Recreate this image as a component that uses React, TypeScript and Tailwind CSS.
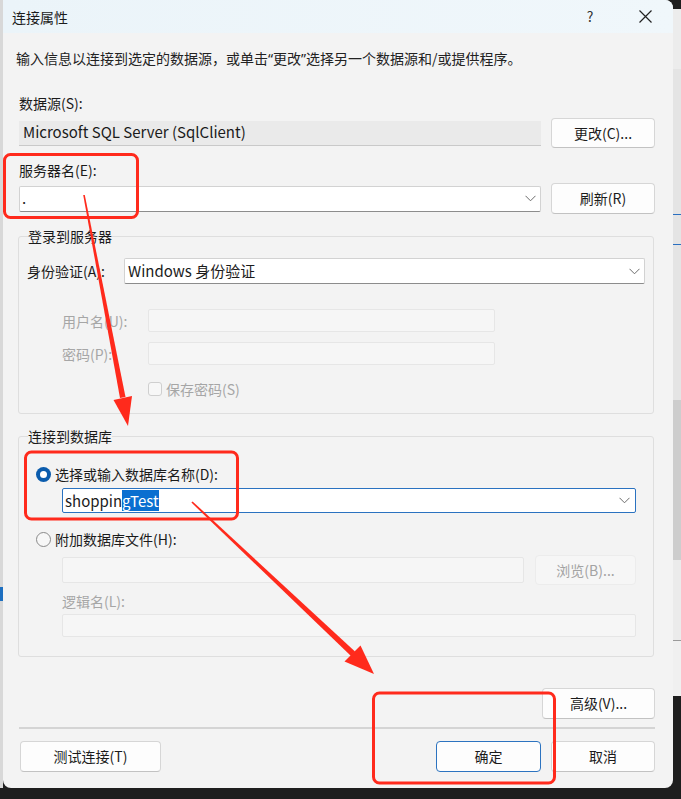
import React from "react";

const Chevron = () => (
  <svg width="11" height="7" viewBox="0 0 11 7" className="shrink-0">
    <path d="M0.5 0.8 L5.5 5.8 L10.5 0.8" stroke="#6b6b6b" fill="none" strokeWidth="1" />
  </svg>
);

function Btn({
  children,
  className = "",
  disabled = false,
  primary = false,
}: {
  children: React.ReactNode;
  className?: string;
  disabled?: boolean;
  primary?: boolean;
}) {
  const base = disabled
    ? "bg-[#f6f6f6] border-[#ececec] text-[#a3a3a3]"
    : primary
    ? "bg-[#fdfdfd] border-[#2c73c0] text-[#1b1b1b]"
    : "bg-[#fdfdfd] border-[#d6d6d6] border-b-[#c2c2c2] text-[#1b1b1b]";
  return (
    <div className={`flex items-center justify-center rounded-[4px] border text-[14px] ${base} ${className}`}>
      {children}
    </div>
  );
}

function Radio({ checked }: { checked?: boolean }) {
  if (checked) {
    return (
      <div className="w-[15px] h-[15px] rounded-full bg-[#0b5cad] flex items-center justify-center shrink-0">
        <div className="w-[7px] h-[7px] rounded-full bg-white" />
      </div>
    );
  }
  return <div className="w-[15px] h-[15px] rounded-full border border-[#8a8a8a] bg-[#f7f7f7] shrink-0" />;
}

export default function App() {
  return (
    <div className="relative w-[681px] h-[799px] bg-[#1e1e1e] overflow-hidden font-['Noto_Sans_CJK_SC','Noto_Sans',sans-serif] text-[#1b1b1b]">
      <div className="flex h-[788px]">
        {/* left strip */}
        <div className="w-[3px] h-full bg-[#d8d8d8] flex flex-col">
          <div className="h-[587px]" />
          <div className="h-[14px] bg-[#1d6fc0]" />
        </div>

        {/* dialog */}
        <div className="w-[670px] h-full bg-[#f3f3f3] rounded-b-[8px] rounded-tr-[8px] flex flex-col">
          {/* title bar */}
          <div className="h-[33px] flex items-center bg-gradient-to-r from-[#ebf4f9] to-[#f0f7fb] rounded-tr-[8px]">
            <span className="ml-[9px] text-[14px] leading-[20px]">连接属性</span>
            <div className="ml-auto w-[20px] h-[20px] flex items-center justify-center text-[14px] text-[#333]">?</div>
            <div className="ml-[35px] mr-[18px] w-[20px] h-[20px] flex items-center justify-center">
              <svg width="13" height="13" viewBox="0 0 13 13">
                <path d="M0.5 0.5 L12.5 12.5 M12.5 0.5 L0.5 12.5" stroke="#222" strokeWidth="1.2" />
              </svg>
            </div>
          </div>

          {/* body */}
          <div className="flex flex-col pl-[16px] pr-[18px]">
            <div className="mt-[15px] -ml-[3px] h-[20px] leading-[20px] text-[14px] text-[#222]">
              输入信息以连接到选定的数据源，或单击<span className="font-['Noto_Sans',sans-serif]">“</span>更改<span className="font-['Noto_Sans',sans-serif]">”</span>选择另一个数据源和/或提供程序。
            </div>

            <div className="mt-[25px] h-[20px] leading-[20px] text-[14px]">数据源(S):</div>
            <div className="mt-[5px] h-[30px] flex items-center gap-[10px]">
              <div className="flex-1 h-[25px] bg-[#eaeaea] border-b border-[#c9c9c9] flex items-center pl-[4px] text-[15px]">
                Microsoft SQL Server (SqlClient)
              </div>
              <Btn className="w-[104px] h-[30px]">更改(C)...</Btn>
            </div>

            <div className="mt-[12px] h-[20px] leading-[20px] text-[14px]">服务器名(E):</div>
            <div className="mt-[3px] h-[31px] flex items-center gap-[10px]">
              <div className="flex-1 h-[26px] bg-white border border-[#d2d2d2] border-b-[#8c8c8c] rounded-[2px] flex items-center pl-[2px] pr-[4px] text-[15px]">
                <span className="flex-1">.</span>
                <Chevron />
              </div>
              <Btn className="w-[104px] h-[31px]">刷新(R)</Btn>
            </div>

            {/* group 1 */}
            <fieldset className="mt-[12px] -ml-[1px] mr-[1px] border border-[#dedede] rounded-[3px] pl-[8px] pr-[8px] pb-[14px]">
              <legend className="h-[20px] leading-[20px] text-[14px] ml-[1px] px-0">登录到服务器</legend>
              <div className="mt-[12px] h-[26px] flex items-center">
                <span className="w-[97px] text-[14px] leading-[20px]">身份验证(A):</span>
                <div className="flex-1 h-[26px] bg-white border border-[#d2d2d2] border-b-[#8c8c8c] rounded-[2px] flex items-center pl-[3px] pr-[4px] text-[15px]">
                  <span className="flex-1">Windows 身份验证</span>
                  <Chevron />
                </div>
              </div>
              <div className="mt-[25px] h-[23px] flex items-center">
                <span className="ml-[35px] w-[86px] text-[14px] leading-[20px] text-[#a6a6a6]">用户名(U):</span>
                <div className="w-[347px] h-[23px] bg-[#f6f6f6] border border-[#e6e6e6] rounded-[2px]" />
              </div>
              <div className="mt-[10px] h-[23px] flex items-center">
                <span className="ml-[35px] w-[86px] text-[14px] leading-[20px] text-[#a6a6a6]">密码(P):</span>
                <div className="w-[347px] h-[23px] bg-[#f6f6f6] border border-[#e6e6e6] rounded-[2px]" />
              </div>
              <div className="mt-[14px] h-[20px] flex items-center">
                <div className="ml-[121px] w-[14px] h-[14px] rounded-[3px] border border-[#cfcfcf] bg-[#f7f7f7]" />
                <span className="ml-[4px] text-[14px] leading-[20px] text-[#a6a6a6]">保存密码(S)</span>
              </div>
            </fieldset>

            {/* group 2 */}
            <fieldset className="mt-[12px] -ml-[1px] mr-[1px] border border-[#dedede] rounded-[3px] pl-[8px] pr-[17px] pb-[19px]">
              <legend className="h-[20px] leading-[20px] text-[14px] ml-[1px] px-0">连接到数据库</legend>
              <div className="mt-[18px] h-[20px] flex items-center">
                <div className="ml-[9px]">
                  <Radio checked />
                </div>
                <span className="ml-[4px] text-[14px] leading-[20px]">选择或输入数据库名称(D):</span>
              </div>
              <div className="mt-[4px] ml-[35px] h-[25px] bg-white border border-[#2a72c0] rounded-[2px] flex items-center pl-[2px] pr-[5px] text-[15px]">
                <span className="flex-1 leading-[20px]">
                  shoppin<span className="bg-[#0a6fd0] text-white">gTest</span>
                </span>
                <Chevron />
              </div>
              <div className="mt-[16px] h-[20px] flex items-center">
                <div className="ml-[9px]">
                  <Radio />
                </div>
                <span className="ml-[4px] text-[14px] leading-[20px]">附加数据库文件(H):</span>
              </div>
              <div className="mt-[6px] ml-[35px] h-[30px] flex items-center gap-[11px]">
                <div className="flex-1 h-[26px] bg-[#f6f6f6] border border-[#e6e6e6] rounded-[2px]" />
                <Btn disabled className="w-[101px] h-[30px]">浏览(B)...</Btn>
              </div>
              <div className="mt-[6px] ml-[35px] h-[20px] leading-[20px] text-[14px] text-[#a6a6a6]">逻辑名(L):</div>
              <div className="mt-[3px] ml-[35px] h-[23px] bg-[#f6f6f6] border border-[#e6e6e6] rounded-[2px]" />
            </fieldset>

            <div className="mt-[31px] flex justify-end">
              <Btn className="w-[113px] h-[31px]">高级(V)...</Btn>
            </div>

            <div className="mt-[8px] h-[2px] bg-[#d4d4d4]" />

            <div className="mt-[12px] h-[31px] flex items-center">
              <Btn className="ml-[1px] w-[141px] h-[31px]">测试连接(T)</Btn>
              <Btn primary className="ml-auto w-[105px] h-[31px]">确定</Btn>
              <Btn className="ml-[10px] w-[104px] h-[31px]">取消</Btn>
            </div>
          </div>
        </div>

        {/* right strip */}
        <div className="w-[8px] h-full flex flex-col bg-[#e4e4e4]">
          <div className="h-[9px] bg-[#1e1e1e]" />
          <div className="h-[60px] bg-[#ececec]" />
          <div className="h-[145px]" />
          <div className="h-[1px] bg-[#2a6fc0]" />
          <div className="h-[29px]" />
          <div className="h-[1px] bg-[#2a6fc0]" />
          <div className="h-[155px]" />
          <div className="h-[160px] bg-[#cdcdcd]" />
          <div className="h-[80px] bg-[#ebebeb]" />
          <div className="h-[1px] bg-[#9a9a9a]" />
          <div className="h-[55px] bg-[#f0f0f0]" />
          <div className="flex-1 bg-[#1e1e1e]" />
        </div>
      </div>

      {/* red annotations */}
      <svg className="absolute inset-0 pointer-events-none" width="681" height="799" viewBox="0 0 681 799">
        <g fill="none" stroke="#ff2a1c" strokeWidth="3">
          <rect x="4.5" y="154.5" width="133" height="63" rx="6" />
          <rect x="25.5" y="452" width="212" height="67" rx="6" />
          <rect x="373.5" y="693" width="181" height="90" rx="6" />
        </g>
        <g fill="#ff2a1c">
          {/* arrow 1 */}
          <polygon points="83.2,195 84.8,195 125.5,397 120,398" />
          <polygon points="113.5,400 132,396 128,426" />
          {/* arrow 2 */}
          <polygon points="191.4,502.6 192.6,501.4 355,651.5 351,656" />
          <polygon points="344.5,661.5 360.5,645.5 374,674" />
        </g>
      </svg>
    </div>
  );
}
